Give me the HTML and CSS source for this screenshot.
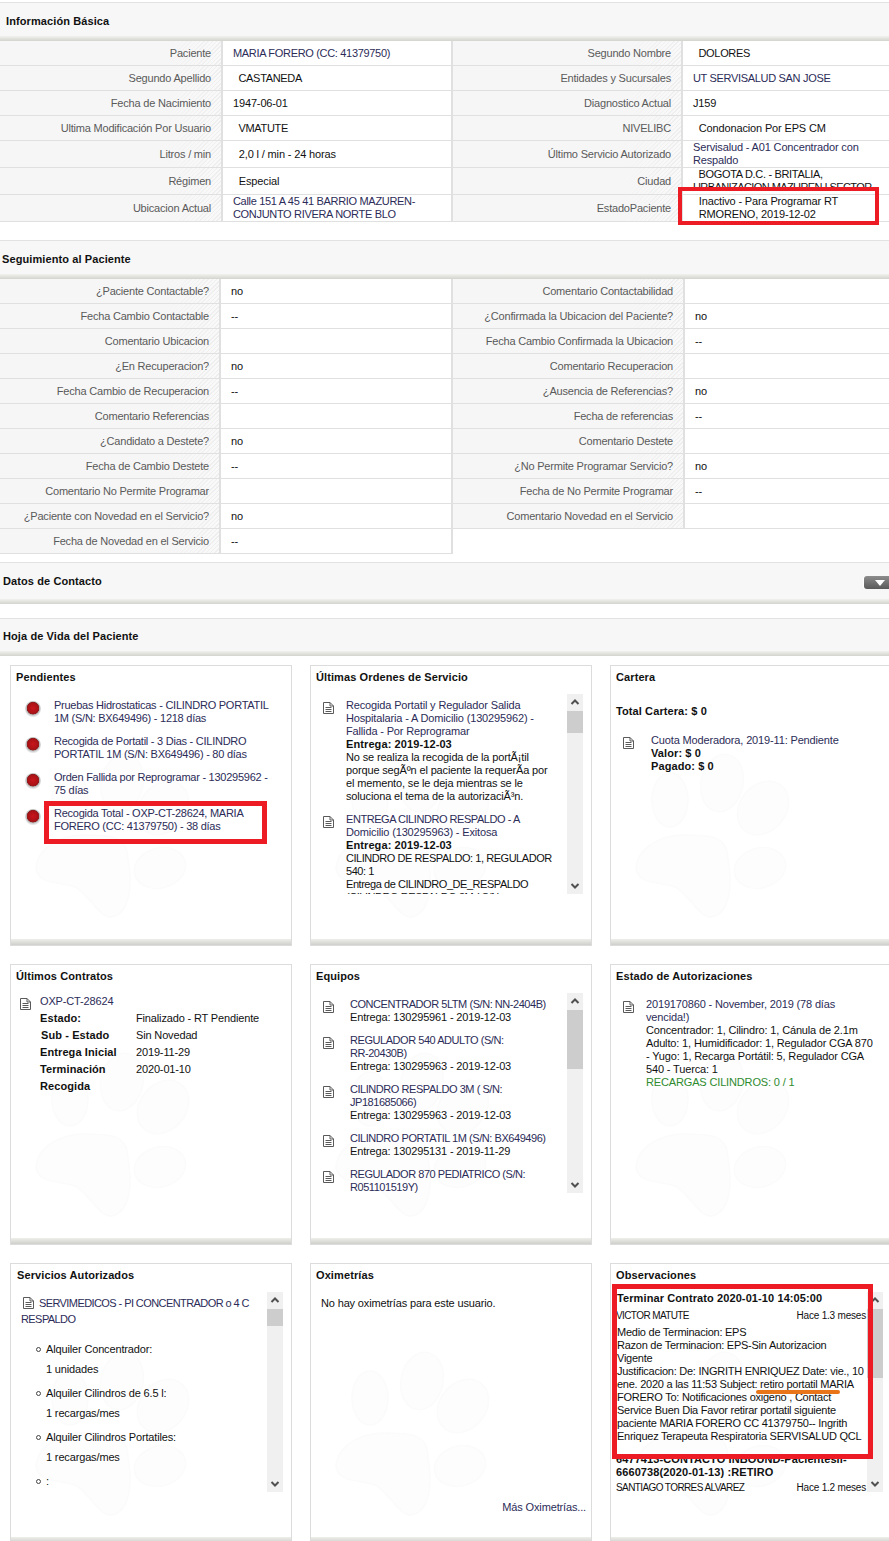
FILE: index.html
```html
<!DOCTYPE html>
<html lang="es">
<head>
    <meta charset="UTF-8">
    <title>Información Básica</title>
    <link rel="stylesheet" href="styles.css">
</head>
<body>
    <svg class="defs" width="0" height="0">
        <symbol id="paw" viewBox="0 0 282 282">
            <ellipse cx="60" cy="135" rx="18" ry="27"></ellipse>
            <ellipse cx="112" cy="118" rx="21" ry="29" transform="rotate(12 112 118)"></ellipse>
            <ellipse cx="153" cy="143" rx="23" ry="29" transform="rotate(40 153 143)"></ellipse>
            <ellipse cx="150" cy="203" rx="26" ry="20" transform="rotate(-15 150 203)"></ellipse>
            <path d="M26 203C28 180 55 170 73 170C100 170 118 170 118 195C122 215 122 250 100 252C90 252 80 232 67 223C55 216 28 222 26 203Z"></path>
        </symbol>
        <symbol id="doc" viewBox="0 0 11 12">
            <path d="M.5.5H7L10.5 4V11.5H.5ZM7 .5V4H10.5M2.5 5.5H8.5M2.5 7.5H8.5M2.5 9.5H8.5" fill="#fff" stroke="#5a5a5a"></path>
        </symbol>
        <symbol id="up" viewBox="0 0 16 17">
            <path d="M4.5 10L8 6.5L11.5 10" fill="none" stroke="#505050" stroke-width="2"></path>
        </symbol>
        <symbol id="down" viewBox="0 0 16 17">
            <path d="M4.5 7L8 10.5L11.5 7" fill="none" stroke="#505050" stroke-width="2"></path>
        </symbol>
    </svg>

    <div class="page">
        <div class="section-head head-first">Información Básica</div>
        <table class="info-table">
            <colgroup><col class="col-a"><col class="col-b"><col class="col-c"><col></colgroup>
            <tr>
                <th>Paciente</th><td class="link caps">MARIA FORERO (CC: 41379750)</td>
                <th>Segundo Nombre</th><td class="caps">&nbsp;&nbsp;DOLORES</td>
            </tr>
            <tr>
                <th>Segundo Apellido</th><td class="caps">&nbsp;&nbsp;CASTANEDA</td>
                <th>Entidades y Sucursales</th><td class="link caps">UT SERVISALUD SAN JOSE</td>
            </tr>
            <tr>
                <th>Fecha de Nacimiento</th><td>1947-06-01</td>
                <th>Diagnostico Actual</th><td>J159</td>
            </tr>
            <tr>
                <th>Ultima Modificación Por Usuario</th><td class="caps">&nbsp;&nbsp;VMATUTE</td>
                <th>NIVELIBC</th><td>&nbsp;&nbsp;Condonacion Por EPS CM</td>
            </tr>
            <tr class="row-tall">
                <th>Litros / min</th><td>&nbsp;&nbsp;2,0 l / min - 24 horas</td>
                <th>Último Servicio Autorizado</th><td class="link">Servisalud - A01 Concentrador con Respaldo</td>
            </tr>
            <tr class="row-tall">
                <th>Régimen</th><td>&nbsp;&nbsp;Especial</td>
                <th>Ciudad</th><td class="caps"><div class="cell-clip">&nbsp;&nbsp;BOGOTA D.C. - BRITALIA, <span class="caps-tight">URBANIZACION MAZUREN I SECTOR</span></div></td>
            </tr>
            <tr class="row-tall">
                <th>Ubicacion Actual</th><td class="link caps">Calle 151 A 45 41 BARRIO MAZUREN-CONJUNTO RIVERA NORTE BLO</td>
                <th>EstadoPaciente</th><td>&nbsp;&nbsp;Inactivo - Para Programar RT<br>&nbsp;&nbsp;RMORENO, 2019-12-02</td>
            </tr>
        </table>

        <div class="section-head head-second">Seguimiento al Paciente</div>
        <table class="info-table info-table-narrow">
            <colgroup><col class="col-a"><col class="col-b"><col class="col-c"><col></colgroup>
            <tr><th>¿Paciente Contactable?</th><td>no</td><th>Comentario Contactabilidad</th><td></td></tr>
            <tr><th>Fecha Cambio Contactable</th><td>--</td><th>¿Confirmada la Ubicacion del Paciente?</th><td>no</td></tr>
            <tr><th>Comentario Ubicacion</th><td></td><th>Fecha Cambio Confirmada la Ubicacion</th><td>--</td></tr>
            <tr><th>¿En Recuperacion?</th><td>no</td><th>Comentario Recuperacion</th><td></td></tr>
            <tr><th>Fecha Cambio de Recuperacion</th><td>--</td><th>¿Ausencia de Referencias?</th><td>no</td></tr>
            <tr><th>Comentario Referencias</th><td></td><th>Fecha de referencias</th><td>--</td></tr>
            <tr><th>¿Candidato a Destete?</th><td>no</td><th>Comentario Destete</th><td></td></tr>
            <tr><th>Fecha de Cambio Destete</th><td>--</td><th>¿No Permite Programar Servicio?</th><td>no</td></tr>
            <tr><th>Comentario No Permite Programar</th><td></td><th>Fecha de No Permite Programar</th><td>--</td></tr>
            <tr><th>¿Paciente con Novedad en el Servicio?</th><td>no</td><th>Comentario Novedad en el Servicio</th><td></td></tr>
            <tr><th>Fecha de Novedad en el Servicio</th><td>--</td></tr>
        </table>

        <div class="section-head head-contact">
            <span>Datos de Contacto</span>
            <button class="toggle-btn" type="button"><span class="toggle-arrow"></span></button>
        </div>
        <div class="section-head head-life">Hoja de Vida del Paciente</div>

        <div class="cards">
            <section class="card">
                <svg class="paw"><use href="#paw"></use></svg>
                <h3 class="card-title">Pendientes</h3>
                <ul class="pending-list">
                    <li><span class="status-dot"></span><span class="link">Pruebas Hidrostaticas - CILINDRO PORTATIL 1M (S/N: BX649496) - 1218 días</span></li>
                    <li><span class="status-dot"></span><span class="link">Recogida de Portatil - 3 Dias - CILINDRO PORTATIL 1M (S/N: BX649496) - 80 días</span></li>
                    <li><span class="status-dot"></span><span class="link">Orden Fallida por Reprogramar - 130295962 - 75 días</span></li>
                    <li><span class="status-dot"></span><span class="link">Recogida Total - OXP-CT-28624, MARIA FORERO (CC: 41379750) - 38 días</span></li>
                </ul>
            </section>

            <section class="card">
                <svg class="paw"><use href="#paw"></use></svg>
                <h3 class="card-title">Últimas Ordenes de Servicio</h3>
                <div class="scroll-area">
                    <div class="scroll-content">
                        <div class="doc-item">
                            <svg class="doc-icon"><use href="#doc"></use></svg>
                            <div>
                                <span class="link">Recogida Portatil y Regulador Salida Hospitalaria - A Domicilio (130295962) - Fallida - Por Reprogramar</span><br>
                                <b>Entrega: 2019-12-03</b><br>
                                No se realiza la recogida de la portÃ¡til porque segÃºn el paciente la requerÃ­a por el memento, se le deja mientras se le soluciona el tema de la autorizaciÃ³n.
                            </div>
                        </div>
                        <div class="doc-item">
                            <svg class="doc-icon"><use href="#doc"></use></svg>
                            <div>
                                <span class="link"><span class="caps">ENTREGA CILINDRO RESPALDO - A</span> Domicilio (130295963) - Exitosa</span><br>
                                <b>Entrega: 2019-12-03</b><br>
                                <span class="caps">CILINDRO DE RESPALDO: 1, REGULADOR 540: 1</span><br>
                                <span class="caps">Entrega de CILINDRO_DE_RESPALDO (CILINDRO RESPALDO 3M ( S/N:</span>
                            </div>
                        </div>
                    </div>
                    <div class="scrollbar">
                        <svg class="scroll-arrow"><use href="#up"></use></svg>
                        <div class="scroll-track"><div class="thumb thumb-orders"></div></div>
                        <svg class="scroll-arrow"><use href="#down"></use></svg>
                    </div>
                </div>
            </section>

            <section class="card">
                <svg class="paw"><use href="#paw"></use></svg>
                <h3 class="card-title">Cartera</h3>
                <div class="wallet">
                    <b class="wallet-total">Total Cartera: $ 0</b>
                    <div class="doc-item doc-item-wallet">
                        <svg class="doc-icon"><use href="#doc"></use></svg>
                        <div>
                            <span class="link">Cuota Moderadora, 2019-11: Pendiente</span><br>
                            <b>Valor: $ 0</b><br>
                            <b>Pagado: $ 0</b>
                        </div>
                    </div>
                </div>
            </section>

            <section class="card">
                <svg class="paw"><use href="#paw"></use></svg>
                <h3 class="card-title">Últimos Contratos</h3>
                <div class="contract">
                    <svg class="doc-icon"><use href="#doc"></use></svg>
                    <div>
                        <div class="link">OXP-CT-28624</div>
                        <dl class="contract-grid">
                            <dt>Estado:</dt><dd>Finalizado - RT Pendiente</dd>
                            <dt>&#8202;Sub - Estado</dt><dd>Sin Novedad</dd>
                            <dt>Entrega Inicial</dt><dd>2019-11-29</dd>
                            <dt>Terminación</dt><dd>2020-01-10</dd>
                            <dt>Recogida</dt><dd></dd>
                        </dl>
                    </div>
                </div>
            </section>

            <section class="card">
                <svg class="paw"><use href="#paw"></use></svg>
                <h3 class="card-title">Equipos</h3>
                <div class="scroll-area">
                    <div class="scroll-content doc-list-wide">
                        <div class="doc-item">
                            <svg class="doc-icon"><use href="#doc"></use></svg>
                            <div><span class="link caps">CONCENTRADOR 5LTM (S/N: NN-2404B)</span><br>Entrega: 130295961 - 2019-12-03</div>
                        </div>
                        <div class="doc-item">
                            <svg class="doc-icon"><use href="#doc"></use></svg>
                            <div><span class="link caps">REGULADOR 540 ADULTO (S/N:<br>RR-20430B)</span><br>Entrega: 130295963 - 2019-12-03</div>
                        </div>
                        <div class="doc-item">
                            <svg class="doc-icon"><use href="#doc"></use></svg>
                            <div><span class="link caps">CILINDRO RESPALDO 3M ( S/N:<br>JP181685066)</span><br>Entrega: 130295963 - 2019-12-03</div>
                        </div>
                        <div class="doc-item">
                            <svg class="doc-icon"><use href="#doc"></use></svg>
                            <div><span class="link caps">CILINDRO PORTATIL 1M (S/N: BX649496)</span><br>Entrega: 130295131 - 2019-11-29</div>
                        </div>
                        <div class="doc-item">
                            <svg class="doc-icon"><use href="#doc"></use></svg>
                            <div><span class="link caps">REGULADOR 870 PEDIATRICO (S/N:<br>R051101519Y)</span></div>
                        </div>
                    </div>
                    <div class="scrollbar">
                        <svg class="scroll-arrow"><use href="#up"></use></svg>
                        <div class="scroll-track"><div class="thumb thumb-equipment"></div></div>
                        <svg class="scroll-arrow"><use href="#down"></use></svg>
                    </div>
                </div>
            </section>

            <section class="card">
                <svg class="paw"><use href="#paw"></use></svg>
                <h3 class="card-title">Estado de Autorizaciones</h3>
                <div class="doc-item doc-item-auth">
                    <svg class="doc-icon"><use href="#doc"></use></svg>
                    <div>
                        <span class="link">2019170860 - November, 2019 (78 días<br>vencida!)</span><br>
                        Concentrador: 1, Cilindro: 1, Cánula de 2.1m<br>
                        Adulto: 1, Humidificador: 1, Regulador CGA 870<br>
                        - Yugo: 1, Recarga Portátil: 5, Regulador CGA<br>
                        540 - Tuerca: 1<br>
                        <span class="recharge">RECARGAS CILINDROS: 0 / 1</span>
                    </div>
                </div>
            </section>

            <section class="card">
                <svg class="paw"><use href="#paw"></use></svg>
                <h3 class="card-title card-title-services">Servicios Autorizados</h3>
                <div class="scroll-area">
                    <div class="scroll-content services">
                        <div class="service-name">
                            <svg class="doc-icon doc-icon-inline"><use href="#doc"></use></svg>
                            <span class="link caps-tight">SERVIMEDICOS - PI CONCENTRADOR o 4 C RESPALDO</span>
                        </div>
                        <ul class="service-list">
                            <li>Alquiler Concentrador:<br>1 unidades</li>
                            <li>Alquiler Cilindros de 6.5 l:<br>1 recargas/mes</li>
                            <li>Alquiler Cilindros Portatiles:<br>1 recargas/mes</li>
                            <li>:</li>
                        </ul>
                    </div>
                    <div class="scrollbar">
                        <svg class="scroll-arrow"><use href="#up"></use></svg>
                        <div class="scroll-track"><div class="thumb thumb-services"></div></div>
                        <svg class="scroll-arrow"><use href="#down"></use></svg>
                    </div>
                </div>
            </section>

            <section class="card">
                <svg class="paw"><use href="#paw"></use></svg>
                <h3 class="card-title">Oximetrías</h3>
                <div class="oximetry">
                    <p class="oximetry-empty">No hay oximetrías para este usuario.</p>
                    <span class="oximetry-more">Más Oximetrías...</span>
                </div>
            </section>

            <section class="card">
                <svg class="paw"><use href="#paw"></use></svg>
                <h3 class="card-title">Observaciones</h3>
                <div class="scroll-area">
                    <div class="scroll-content notes">
                        <b class="note-title note-first">Terminar Contrato 2020-01-10 14:05:00</b>
                        <div class="note-meta"><span>VICTOR MATUTE</span><span class="note-ago">Hace 1.3 meses</span></div>
                        <p class="note-text">Medio de Terminacion: EPS<br>
                            Razon de Terminacion: EPS-Sin Autorizacion<br>
                            Vigente<br>
                            Justificacion: De: INGRITH ENRIQUEZ Date: vie., 10<br>
                            ene. 2020 a las 11:53 Subject: retiro portatil MARIA<br>
                            FORERO To: Notificaciones oxigeno , Contact<br>
                            Service Buen Dia Favor retirar portatil siguiente<br>
                            paciente MARIA FORERO CC 41379750-- Ingrith<br>
                            Enriquez Terapeuta Respiratoria SERVISALUD QCL</p>
                        <b class="note-title">6477413-CONTACTO INBOUND-Pacientesll-6660738(2020-01-13) :RETIRO</b>
                        <div class="note-meta note-meta-last"><span>SANTIAGO TORRES ALVAREZ</span><span class="note-ago">Hace 1.2 meses</span></div>
                    </div>
                    <div class="scrollbar">
                        <svg class="scroll-arrow"><use href="#up"></use></svg>
                        <div class="scroll-track"><div class="thumb thumb-notes"></div></div>
                        <svg class="scroll-arrow"><use href="#down"></use></svg>
                    </div>
                </div>
            </section>
        </div>

        <!-- marcas rojas sobre la captura -->
        <div class="mark mark-status"></div>
        <div class="mark mark-pending"></div>
        <div class="mark mark-notes"></div>
        <div class="underline-mark"></div>
    </div>
</body>
</html>
```

FILE: styles.css
```css
html {
    overflow: hidden;
}

body {
    margin: 0;
    font-family: "Liberation Sans", Arial, sans-serif;
    font-size: 11px;
    line-height: 13px;
    letter-spacing: -0.15px;
    color: #111;
    background: #fff;
}

b, h3, .section-head {
    letter-spacing: 0.1px;
}

.defs {
    position: absolute;
}

.page {
    position: relative;
    width: 889px;
    height: 1541px;
    overflow: hidden;
}

.link {
    color: #2c2c58;
}

.caps {
    letter-spacing: -0.45px;
}

.caps-tight {
    letter-spacing: -0.58px;
}

/* cabeceras de seccion */
.section-head {
    box-sizing: border-box;
    display: flex;
    justify-content: space-between;
    align-items: center;
    height: 39px;
    padding: 0 0 1px 2px;
    border-top: 1px solid #e2e2e2;
    font-weight: bold;
    color: #111;
    background: linear-gradient(#f1f1ed, #d4d4cf) bottom / 100% 5px no-repeat, #f7f7f7;
}

.head-first {
    margin-top: 2px;
    padding-left: 6px;
}

.head-second {
    margin-top: 18px;
}

.head-contact {
    height: 42px;
    margin-top: 8px;
    padding-left: 3px;
    padding-bottom: 5px;
}

.head-life {
    height: 38px;
    margin-top: 14px;
    padding-left: 3px;
    padding-bottom: 3px;
}

.toggle-btn {
    width: 25px;
    height: 13px;
    margin-top: 2px;
    padding: 0;
    border: 0;
    border-radius: 3px 0 0 3px;
    background: linear-gradient(#8c8c8c, #5a5a5a);
    box-shadow: -1px 0 0 #fff;
}

.toggle-arrow {
    display: block;
    width: 0;
    height: 0;
    margin: 2px 0 0 11px;
    border-left: 5px solid transparent;
    border-right: 5px solid transparent;
    border-top: 6px solid #fff;
}

/* tablas de datos */
.info-table {
    width: 889px;
    table-layout: fixed;
    border-collapse: separate;
    border-spacing: 0;
}

.col-a {
    width: 223px;
}

.col-b {
    width: 230px;
}

.col-c {
    width: 230px;
}

.info-table-narrow .col-a {
    width: 221px;
}

.info-table-narrow .col-b {
    width: 232px;
}

.info-table-narrow .col-c {
    width: 232px;
}

.info-table th,
.info-table td {
    box-sizing: border-box;
    height: 25px;
    padding: 0 0 0 10px;
    border-bottom: 1px solid #e0e0e0;
    overflow: hidden;
}

.info-table .row-tall th,
.info-table .row-tall td {
    height: 27px;
}

.info-table .caps {
    letter-spacing: -0.32px;
}

.cell-clip {
    max-height: 26px;
    overflow: hidden;
}

.info-table th {
    padding-right: 10px;
    border-right: 2px solid #e0e0e0;
    font-weight: normal;
    letter-spacing: -0.2px;
    text-align: right;
    color: #5a5a5a;
    background: linear-gradient(to right, #f6f6f6 75%, rgba(246, 246, 246, 0)), repeating-linear-gradient(135deg, #eeeeee 0 1px, #f9f9f9 1px 3px);
}

.info-table td:nth-child(2) {
    padding-right: 10px;
    border-right: 2px solid #e0e0e0;
}

/* tarjetas */
.cards {
    display: grid;
    grid-template-columns: repeat(3, 282px);
    grid-auto-rows: 281px;
    gap: 18px;
    margin-top: 9px;
    padding-left: 10px;
}

.card {
    position: relative;
    box-sizing: border-box;
    display: flex;
    flex-direction: column;
    border: 1px solid #dcdcdc;
    background: linear-gradient(#eeeeea, #cfcfcb) bottom / 100% 6px no-repeat, #fff;
}

.card > * {
    position: relative;
}

.card > .paw {
    position: absolute;
    left: -1px;
    top: -1px;
    width: 282px;
    height: 282px;
    fill: #fdfdfd;
    stroke: #fbfbfb;
    stroke-width: 1.5;
}

.card-title {
    height: 28px;
    margin: 0;
    padding-left: 5px;
    font-size: 11px;
    line-height: 22px;
    color: #111;
}

.card-title-services {
    padding-left: 6px;
}

.pending-list {
    margin: 5px 0 0;
    padding: 0 0 0 14px;
    list-style: none;
    letter-spacing: -0.25px;
}

.pending-list li {
    display: flex;
    gap: 13px;
    width: 255px;
    margin-bottom: 10px;
}

.status-dot {
    flex: none;
    width: 16px;
    height: 16px;
    margin-top: 2px;
    border-radius: 50%;
    background: radial-gradient(circle at 50% 45%, #c8161c 0, #aa1216 5px, #8b2020 6px, #b5b5b5 6.5px, #e4e4e4 8px);
}

.doc-icon {
    flex: none;
    width: 11px;
    height: 12px;
    margin-top: 3px;
}

.doc-item {
    display: flex;
    gap: 12px;
    margin-bottom: 10px;
}

/* zona con barra de desplazamiento */
.scroll-area {
    display: flex;
    height: 200px;
    margin-right: 8px;
}

.scroll-content {
    flex: 1;
    min-width: 0;
    padding: 5px 10px 0 12px;
    overflow: hidden;
}

.doc-list-wide .doc-item {
    gap: 16px;
}

.scrollbar {
    flex: none;
    display: flex;
    flex-direction: column;
    width: 16px;
    background: #f0f0f0;
}

.scroll-arrow {
    flex: none;
    width: 16px;
    height: 17px;
}

.scroll-track {
    flex: 1;
}

.thumb {
    background: #cdcdcd;
}

.thumb-orders {
    height: 22px;
}

.thumb-equipment {
    height: 59px;
}

.thumb-services {
    height: 17px;
}

.thumb-notes {
    height: 69px;
}

.wallet {
    padding: 0 0 0 5px;
}

.wallet-total {
    display: block;
    margin-top: 11px;
}

.doc-item-wallet {
    gap: 17px;
    margin-top: 16px;
    padding-left: 7px;
}

.contract {
    display: flex;
    gap: 9px;
    padding: 2px 0 0 9px;
}

.contract-grid {
    display: grid;
    grid-template-columns: 96px 1fr;
    grid-auto-rows: 17px;
    margin: 2px 0 0;
    line-height: 17px;
}

.contract-grid dt {
    font-weight: bold;
    letter-spacing: 0.1px;
}

.contract-grid dd {
    margin: 0;
}

.doc-item-auth {
    padding: 5px 0 0 12px;
    white-space: nowrap;
}

.recharge {
    color: #2e8b2e;
}

.services {
    padding-top: 3px;
    padding-left: 10px;
}

.service-name {
    line-height: 16px;
}

.doc-icon-inline {
    margin: 0 2px 0 2px;
    vertical-align: -2px;
}

.service-list {
    margin: 12px 0 0;
    padding: 0 0 0 25px;
    list-style: none;
    line-height: 20px;
}

.service-list li {
    position: relative;
    margin-bottom: 4px;
}

.service-list li::before {
    content: "";
    position: absolute;
    left: -10px;
    top: 8px;
    box-sizing: border-box;
    width: 5px;
    height: 5px;
    border: 1px solid #444;
    border-radius: 50%;
}

.oximetry {
    flex: 1;
    display: flex;
    flex-direction: column;
    justify-content: space-between;
    padding: 5px 5px 29px 10px;
}

.oximetry-empty {
    margin: 0;
}

.oximetry-more {
    text-align: right;
    color: #2c2c58;
}

.notes {
    padding: 0 0 0 5px;
}

.note-title {
    display: block;
}

.note-first {
    padding-left: 1px;
}

.note-meta {
    display: flex;
    justify-content: space-between;
    margin-top: 4px;
    padding-right: 1px;
    font-size: 10px;
    letter-spacing: -0.6px;
}

.note-meta-last {
    margin-top: 2px;
}

.note-ago {
    letter-spacing: -0.2px;
}

.note-text {
    margin: 4px 0 10px;
    padding-left: 1px;
    letter-spacing: -0.25px;
    white-space: nowrap;
}

/* anotaciones sobre la captura */
.mark {
    position: absolute;
    box-sizing: border-box;
    border: 5px solid #ed1c24;
}

.mark-status {
    left: 678px;
    top: 187px;
    width: 201px;
    height: 38px;
    border-width: 4px;
}

.mark-pending {
    left: 44px;
    top: 801px;
    width: 223px;
    height: 43px;
}

.mark-notes {
    left: 612px;
    top: 1284px;
    width: 261px;
    height: 175px;
}

.underline-mark {
    position: absolute;
    left: 756px;
    top: 1390px;
    width: 84px;
    height: 4px;
    border-radius: 2px;
    background: #e8751a;
}
```
